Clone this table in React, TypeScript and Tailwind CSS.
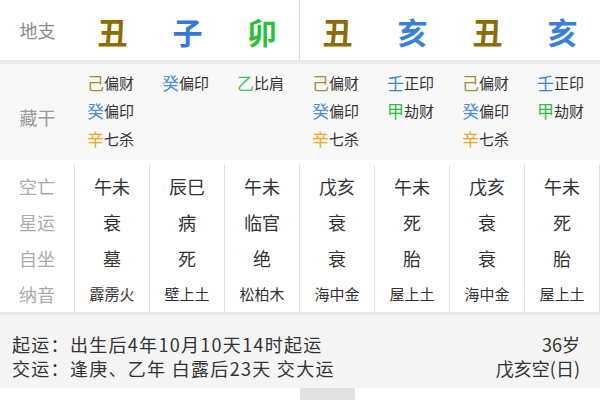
import React from 'react';

const FONT = { fontFamily: '"Noto Sans CJK SC", "Noto Sans", sans-serif' };

type Stem = { s: string; c: string; god: string };

const branches = [
  { t: '丑', c: 'text-[#8c6c04]' },
  { t: '子', c: 'text-[#3479da]' },
  { t: '卯', c: 'text-[#27c23c]' },
  { t: '丑', c: 'text-[#8c6c04]' },
  { t: '亥', c: 'text-[#3a7fd8]' },
  { t: '丑', c: 'text-[#8c6c04]' },
  { t: '亥', c: 'text-[#3a7fd8]' },
];

const ji: Stem = { s: '己', c: 'text-[#a48e34]', god: '偏财' };
const gui: Stem = { s: '癸', c: 'text-[#4a8fe0]', god: '偏印' };
const xin: Stem = { s: '辛', c: 'text-[#f0a428]', god: '七杀' };
const yi: Stem = { s: '乙', c: 'text-[#3cc45a]', god: '比肩' };
const ren: Stem = { s: '壬', c: 'text-[#3a86d6]', god: '正印' };
const jia: Stem = { s: '甲', c: 'text-[#2ebf42]', god: '劫财' };

const hidden: Stem[][] = [
  [ji, gui, xin],
  [gui],
  [yi],
  [ji, gui, xin],
  [ren, jia],
  [ji, gui, xin],
  [ren, jia],
];

const rows = [
  { label: '空亡', vals: ['午未', '辰巳', '午未', '戊亥', '午未', '戊亥', '午未'], small: false },
  { label: '星运', vals: ['衰', '病', '临官', '衰', '死', '衰', '死'], small: false },
  { label: '自坐', vals: ['墓', '死', '绝', '衰', '胎', '衰', '胎'], small: false },
  { label: '纳音', vals: ['霹雳火', '壁上土', '松柏木', '海中金', '屋上土', '海中金', '屋上土'], small: true },
];

export default function App() {
  return (
    <div className="w-[600px] h-[400px] overflow-hidden bg-white" style={FONT}>
      {/* 地支 */}
      <div className="grid grid-cols-[75px_repeat(7,75px)] h-[60px] items-stretch">
        <div className="flex items-center justify-center text-[18px] text-[#8a8a8a]">地支</div>
        {branches.map((b, i) => (
          <div
            key={i}
            className={`flex items-center justify-center text-[30px] font-bold pt-[2px] ${b.c} ${i === 2 ? 'border-r border-[#dcdcdc]' : ''}`}
          >
            {b.t}
          </div>
        ))}
      </div>
      <div className="h-[4px] bg-[#ebebeb]" />

      {/* 藏干 */}
      <div className="grid grid-cols-[75px_repeat(7,75px)] h-[96px] bg-[#f8f8f8]">
        <div className="flex items-center justify-center text-[18px] text-[#9a9a9a] pt-[10px]">藏干</div>
        {hidden.map((col, i) => (
          <div key={i} className="flex flex-col pt-[5px] pl-[12px]">
            {col.map((h, j) => (
              <div key={j} className="leading-[28px] text-[15px] flex items-center">
                <span className={`text-[17px] ${h.c}`}>{h.s}</span>
                <span className="text-[#333333]">{h.god}</span>
              </div>
            ))}
          </div>
        ))}
      </div>

      {/* 空亡 星运 自坐 纳音 */}
      <div className="grid grid-cols-[75px_repeat(7,75px)] h-[152px] py-[5px]">
        <div className="flex flex-col pt-[3px] border-r border-[#dedede]">
          {rows.map((r) => (
            <div key={r.label} className="h-[36px] flex items-center justify-center text-[18px] text-[#ababab]">
              {r.label}
            </div>
          ))}
        </div>
        {branches.map((_, i) => (
          <div key={i} className="flex flex-col pt-[3px] border-r border-[#dedede]">
            {rows.map((r) => (
              <div
                key={r.label}
                className={`h-[36px] flex items-center justify-center text-[#333333] ${r.small ? 'text-[15px]' : 'text-[18px]'}`}
              >
                {r.vals[i]}
              </div>
            ))}
          </div>
        ))}
      </div>
      <div className="h-[3px] bg-[#e8e8e8]" />

      {/* 起运 / 交运 */}
      <div className="bg-[#f5f5f5] h-[73px] pt-[17px] pl-[12px] pr-[20px] text-[18px] text-[#333333]">
        <div className="flex justify-between leading-[24px]">
          <span className="tracking-[1.3px]">起运：出生后4年10月10天14时起运</span>
          <span>36岁</span>
        </div>
        <div className="flex justify-between leading-[24px]">
          <span className="tracking-[1.3px]">交运：逢庚、乙年 白露后23天 交大运</span>
          <span>戊亥空(日)</span>
        </div>
      </div>
      <div className="flex h-[12px]">
        <div className="w-[300px]" />
        <div className="w-[55px] bg-[#e2e2e2]" />
      </div>
    </div>
  );
}
